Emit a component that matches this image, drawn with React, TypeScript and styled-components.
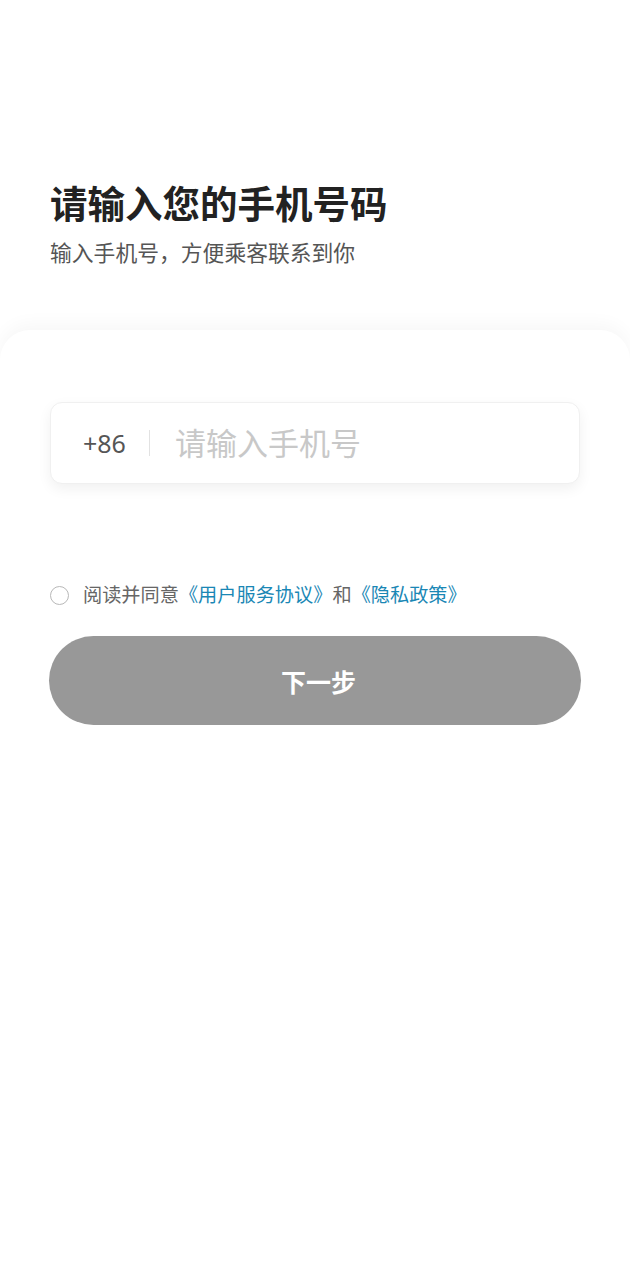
import React, { useState } from 'react';
import styled, { createGlobalStyle } from 'styled-components';

const GlobalStyle = createGlobalStyle`
  html, body {
    margin: 0;
    padding: 0;
    background: #fff;
  }
  body {
    font-family: "Noto Sans", "Noto Sans CJK SC", sans-serif;
  }
  * {
    box-sizing: border-box;
  }
`;

const Page = styled.div`
  min-height: 1280px;
  background: #fff;
  display: flex;
  flex-direction: column;
`;

const Header = styled.div`
  padding: 181px 50px 0;
`;

const Title = styled.h1`
  margin: 0;
  font-size: 37.5px;
  line-height: 46px;
  font-weight: 600;
  color: #222;
`;

const Subtitle = styled.p`
  margin: 11px 0 0;
  font-size: 21.8px;
  line-height: 30px;
  color: #555;
`;

const Card = styled.div`
  flex: 1;
  margin-top: 62px;
  padding: 72px 49px 0;
  border-radius: 30px 30px 0 0;
  background: #fff;
  box-shadow: 0 -6px 18px rgba(0, 0, 0, 0.035);
`;

const InputBox = styled.label`
  height: 82px;
  margin: 0 1px;
  display: flex;
  align-items: center;
  padding: 0 32px;
  border: 1px solid #f0f0f0;
  border-radius: 12px;
  background: #fff;
  box-shadow: 0 5px 14px rgba(0, 0, 0, 0.06);
`;

const Prefix = styled.span`
  font-size: 25px;
  color: #555;
  padding-right: 23px;
  border-right: 1px solid #e2e2e2;
  line-height: 26px;
`;

const PhoneInput = styled.input`
  flex: 1;
  min-width: 0;
  margin-left: 23px;
  border: 0;
  outline: 0;
  background: transparent;
  font-family: "Noto Sans", "Noto Sans CJK SC", sans-serif;
  font-size: 31px;
  color: #333;

  &::placeholder {
    color: #c8c8c8;
  }
`;

const Agreement = styled.div`
  margin-top: 99px;
  display: flex;
  align-items: center;
  font-size: 19.2px;
  line-height: 24px;
  color: #666;
`;

const Radio = styled.button<{ $checked: boolean }>`
  width: 19px;
  height: 19px;
  padding: 0;
  margin: 0 14px 0 1px;
  border-radius: 50%;
  border: 1.5px solid #b8b8b8;
  background: ${(p) => (p.$checked ? '#1a8bb8' : '#fff')};
  cursor: pointer;
`;

const Link = styled.a`
  color: #1a87b5;
  text-decoration: none;
`;

const NextButton = styled.button<{ $active: boolean }>`
  display: block;
  width: 100%;
  height: 89px;
  margin-top: 29px;
  padding: 0 0 0 7px;
  border: 0;
  border-radius: 45px;
  background: ${(p) => (p.$active ? '#1a87b5' : '#989898')};
  color: #fff;
  font-family: "Noto Sans", "Noto Sans CJK SC", sans-serif;
  font-size: 25px;
  font-weight: 600;
`;

const App = () => {
  const [phone, setPhone] = useState('');
  const [agreed, setAgreed] = useState(false);

  return (
    <>
      <GlobalStyle />
      <Page>
        <Header>
          <Title>请输入您的手机号码</Title>
          <Subtitle>输入手机号，方便乘客联系到你</Subtitle>
        </Header>

        <Card>
          <InputBox>
            <Prefix>+86</Prefix>
            <PhoneInput
              value={phone}
              onChange={(e) => setPhone(e.target.value)}
              placeholder="请输入手机号"
              inputMode="numeric"
            />
          </InputBox>

          <Agreement>
            <Radio $checked={agreed} onClick={() => setAgreed(!agreed)} aria-label="同意协议" />
            阅读并同意<Link>《用户服务协议》</Link>和<Link>《隐私政策》</Link>
          </Agreement>

          <NextButton $active={agreed && phone.length === 11}>下一步</NextButton>
        </Card>
      </Page>
    </>
  );
};

export default App;
